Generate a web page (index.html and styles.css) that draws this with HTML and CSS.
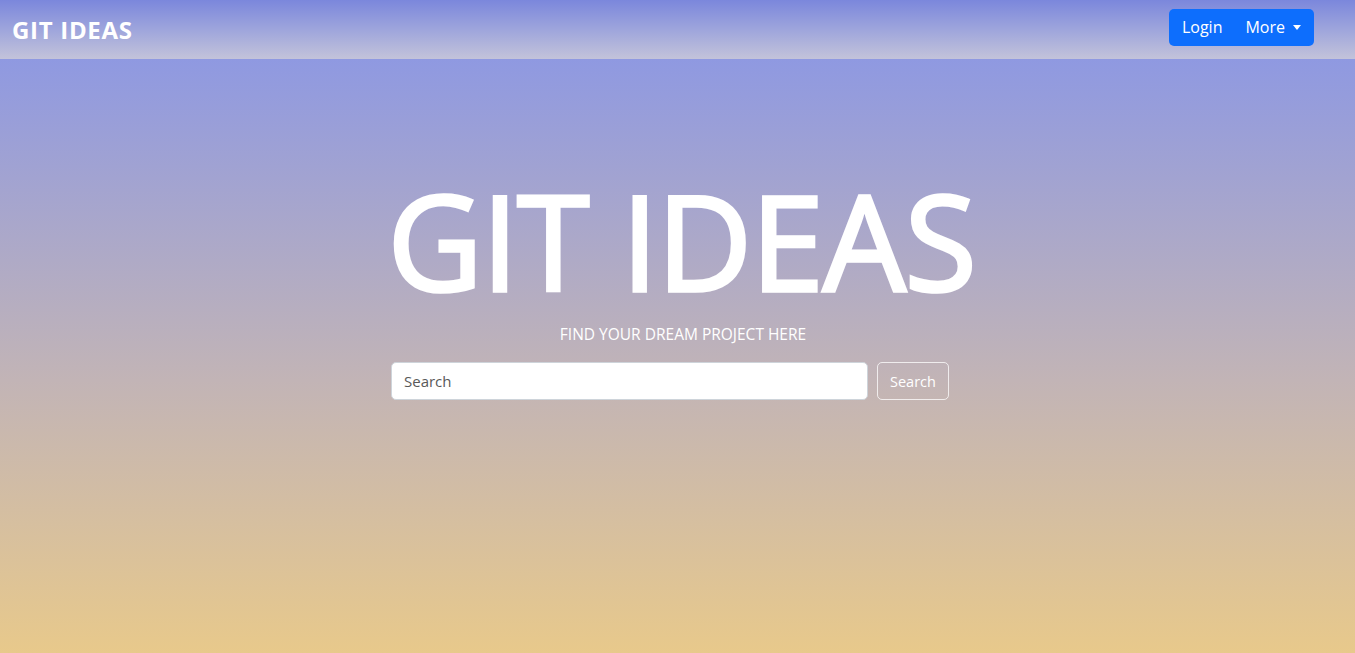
FILE: index.html
```html
<!DOCTYPE html>
<html lang="en">
<head>
<meta charset="utf-8">
<title>Git Ideas</title>
<link rel="stylesheet" href="styles.css">
</head>
<body>
<header class="navbar">
  <a class="brand" href="#">GIT IDEAS</a>
  <nav class="nav-group">
    <a class="nav-link" href="#">Login</a>
    <a class="nav-link dropdown" href="#">More <span class="caret"></span></a>
  </nav>
</header>
<main class="hero">
  <h1 class="hero-title">GIT IDEAS</h1>
  <p class="hero-sub">FIND YOUR DREAM PROJECT HERE</p>
  <form class="search">
    <input class="search-input" type="text" placeholder="Search">
    <button class="search-btn" type="button">Search</button>
  </form>
</main>
</body>
</html>
```
FILE: styles.css
```css
* { box-sizing: border-box; }
html, body { margin: 0; height: 100%; }
body {
  font-family: "Open Sans", "Noto Sans", sans-serif;
  color: #fff;
  background: linear-gradient(180deg, #8f99e1 0px, #8f99e1 59px, #c2b4b6 380px, #e8c98b 653px);
  display: flex;
  flex-direction: column;
  overflow: hidden;
}
.navbar {
  height: 59px;
  flex: none;
  display: flex;
  align-items: center;
  justify-content: space-between;
  padding: 0 41px 0 12px;
  background: linear-gradient(180deg, #7b87dc 0%, #9ea5dc 50%, #c3c3da 100%);
}
.brand {
  color: #fff;
  text-decoration: none;
  font-weight: 700;
  font-size: 24px;
  letter-spacing: 0.7px;
}
.nav-group {
  display: flex;
  align-items: center;
  height: 37px;
  margin-top: -5px;
  background: #0d6efd;
  border-radius: 5px;
  padding: 0 13px;
  gap: 23px;
}
.nav-link {
  color: #fff;
  text-decoration: none;
  font-size: 16px;
  display: flex;
  align-items: center;
}
.caret {
  display: inline-block;
  margin-left: 8px;
  width: 0; height: 0;
  border-left: 4px solid transparent;
  border-right: 4px solid transparent;
  border-top: 5px solid #fff;
}
.hero {
  flex: 1;
  display: flex;
  flex-direction: column;
  align-items: center;
  padding-top: 116px;
}
.hero-title {
  margin: 0 0 0 8px;
  font-weight: 400;
  font-size: 131px;
  line-height: 1;
  letter-spacing: -1px;
  -webkit-text-stroke: 3.5px #fff;
}
.hero-sub {
  margin: 18px 0 0 11px;
  font-size: 15.5px;
  line-height: 20px;
}
.search {
  display: flex;
  gap: 9px;
  margin: 18px 15px 0 0;
}
.search-input {
  width: 477px;
  height: 38px;
  border: 1px solid #ced4da;
  border-radius: 5px;
  padding: 0 12px;
  font-family: inherit;
  font-size: 15px;
  color: #333;
  background: #fff;
  outline: none;
}
.search-input::placeholder { color: #595959; }
.search-btn {
  width: 72px;
  height: 38px;
  border: 1px solid rgba(255,255,255,0.75);
  border-radius: 5px;
  background: transparent;
  color: #fff;
  font-family: inherit;
  font-size: 14.5px;
  padding: 0;
}
```
